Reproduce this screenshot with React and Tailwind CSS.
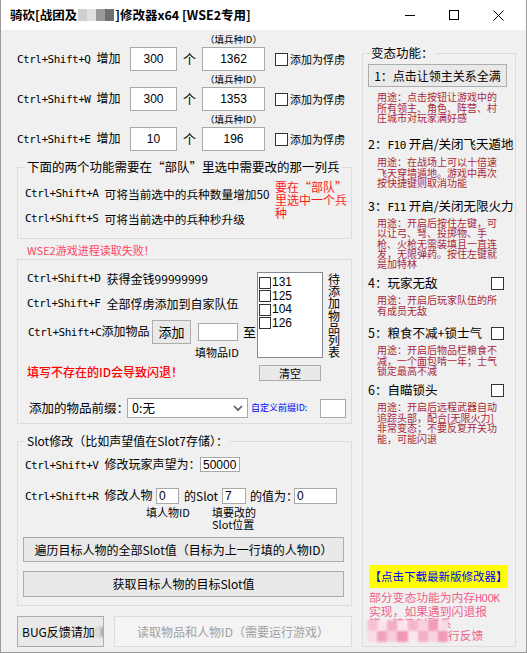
import React from "react";

const CJK = "font-['Noto_Sans_CJK_SC','Noto_Sans',sans-serif]";
const MONO = "font-['DejaVu_Sans_Mono','Noto_Sans_CJK_SC',monospace] text-[11px] tracking-[-0.5px]";
const SANS = "font-['Liberation_Sans','Noto_Sans_CJK_SC',sans-serif]";

// hotkey label, with a hard space after it when asked for
function Key({ k, space = true }) {
  return (
    <span className={MONO}>
      {k}
      {space ? "\u00a0" : ""}
    </span>
  );
}

function TextBox({ value = "", className = "", center = false }) {
  return (
    <div
      className={
        "bg-white border border-[#a9a9a9] flex items-center text-[12px] text-black shrink-0 " +
        SANS +
        " " +
        (center ? "justify-center " : "pl-[2px] ") +
        className
      }
    >
      {value}
    </div>
  );
}

function Check({ className = "" }) {
  return <span className={"inline-block w-[13px] h-[13px] bg-white border border-[#333333] shrink-0 " + className} />;
}

function Button({ children, className = "" }) {
  return (
    <div
      className={
        "bg-[#e9e9e9] border border-[#adadad] flex items-center justify-center text-black shrink-0 " + CJK + " " + className
      }
    >
      {children}
    </div>
  );
}

function Desc({ lines, className = "" }) {
  return (
    <div className={"pl-[14px] text-[10px] text-[#a8283c] whitespace-nowrap " + CJK + " " + className}>
      {lines.map((l, i) => (
        <div key={i}>{l}</div>
      ))}
    </div>
  );
}

function Heading({ children, check = false, className = "" }) {
  return (
    <div className={"flex items-center justify-between pl-[5px] w-[141px] h-[18px] text-[12.5px] leading-[18px] " + CJK + " " + className}>
      <span className="whitespace-nowrap">{children}</span>
      {check && <Check />}
    </div>
  );
}

const troopRows = [
  ["Q", "300", "1362"],
  ["W", "300", "1353"],
  ["E", "10", "196"],
];

const pinkCells = [
  "bg-[#f7c2d3]", "bg-[#fbe4ec]", "bg-[#f4a9c2]", "bg-[#fde9ef]", "bg-[#f6b6cb]", "bg-[#fad5e1]", "bg-[#f49bb9]", "bg-[#fbe0e9]",
  "bg-[#fadbe5]", "bg-[#f39ab8]", "bg-[#f8cad9]", "bg-[#f28db0]", "bg-[#fbe7ee]", "bg-[#f5a8c1]", "bg-[#f9d2df]", "bg-[#f190b2]",
];

export default function App() {
  return (
    <div className={"w-[527px] h-[653px] bg-[#f0f0f0] border-x border-b border-[#9a9a9a] flex flex-col overflow-hidden text-black " + CJK}>
      {/* title bar */}
      <div className="h-[30px] bg-white flex items-center shrink-0">
        <div className="pl-[9px] text-[12.5px] font-bold whitespace-nowrap flex items-center">
          <span>骑砍[战团及</span>
          <span className="inline-flex mx-[1px] blur-[0.7px]">
            <span className="w-[9px] h-[12px] bg-[#cfcfcf]" />
            <span className="w-[9px] h-[12px] bg-[#e0e0e0]" />
            <span className="w-[9px] h-[12px] bg-[#9a9a9a]" />
            <span className="w-[9px] h-[12px] bg-[#6f6f6f]" />
          </span>
          <span>]修改器x64 [WSE2专用]</span>
        </div>
        <div className="ml-auto flex items-center pr-[6px]">
          <div className="w-[44px] h-[30px] flex items-center justify-center">
            <svg width="10" height="10" viewBox="0 0 10 10">
              <line x1="0" y1="5.5" x2="10" y2="5.5" stroke="#000" strokeWidth="1" />
            </svg>
          </div>
          <div className="w-[44px] h-[30px] flex items-center justify-center">
            <svg width="10" height="10" viewBox="0 0 10 10">
              <rect x="0.5" y="0.5" width="9" height="9" fill="none" stroke="#000" strokeWidth="1" />
            </svg>
          </div>
          <div className="w-[44px] h-[30px] flex items-center justify-center">
            <svg width="11" height="11" viewBox="0 0 11 11">
              <line x1="0.5" y1="0.5" x2="10.5" y2="10.5" stroke="#000" strokeWidth="1" />
              <line x1="10.5" y1="0.5" x2="0.5" y2="10.5" stroke="#000" strokeWidth="1" />
            </svg>
          </div>
        </div>
      </div>

      {/* body */}
      <div className="flex flex-row flex-1">
        {/* left column */}
        <div className="w-[356px] flex flex-col shrink-0">
          <div className="pt-[2px] flex flex-col">
            {troopRows.map(([k, n, id]) => (
              <div key={k} className="h-[40px] flex flex-col">
                <div className="h-[15px] flex">
                  <span className="w-[201px]" />
                  <span className="w-[63px] text-center text-[9.5px] leading-[15px] whitespace-nowrap">（填兵种ID）</span>
                </div>
                <div className="h-[24px] flex items-center">
                  <div className="w-[129px] pl-[16px] whitespace-nowrap text-[12px]">
                    <Key k={"Ctrl+Shift+" + k} />
                    <span>增加</span>
                  </div>
                  <TextBox value={n} center className="w-[47px] h-[24px]" />
                  <span className="w-[25px] text-center text-[13px]">个</span>
                  <TextBox value={id} center className="w-[63px] h-[24px]" />
                  <Check className="ml-[10px]" />
                  <span className="ml-[2px] text-[11px] whitespace-nowrap">添加为俘虏</span>
                </div>
              </div>
            ))}
          </div>

          {/* group: selected troop */}
          <fieldset className="mt-[7px] ml-[16px] w-[335px] border border-[#dcdcdc]">
            <legend className="ml-[7px] px-[2px] text-[12.5px] leading-[16px] whitespace-nowrap">
              下面的两个功能需要在“部队”里选中需要改的那一列兵
            </legend>
            <div className="flex flex-row pb-[9px]">
              <div className="w-[257px] flex flex-col text-[11.7px]">
                <div className="mt-[9px] h-[20px] pl-[7px] flex items-center whitespace-nowrap">
                  <Key k="Ctrl+Shift+A" />
                  <span>可将当前选中的兵种数量增加50</span>
                </div>
                <div className="mt-[5px] h-[20px] pl-[7px] flex items-center whitespace-nowrap">
                  <Key k="Ctrl+Shift+S" />
                  <span>可将当前选中的兵种秒升级</span>
                </div>
              </div>
              <div className="pt-[5px] text-[12px] leading-[13px] text-[#ff1a1a] whitespace-nowrap">
                要在“部队”
                <br />
                里选中一个兵
                <br />种
              </div>
            </div>
          </fieldset>

          <div className="h-[20px] pl-[26px] text-[11px] leading-[22px] text-[#ff4466] whitespace-nowrap">
            WSE2游戏进程读取失败！
          </div>

          {/* group: items */}
          <fieldset className="ml-[16px] w-[335px] border border-[#dcdcdc] pb-[5px]">
            <div className="flex flex-row">
              <div className="w-[239px] flex flex-col text-[12px]">
                <div className="mt-[9px] h-[20px] pl-[9px] flex items-center whitespace-nowrap">
                  <Key k="Ctrl+Shift+D" />
                  <span>获得金钱99999999</span>
                </div>
                <div className="mt-[5px] h-[20px] pl-[9px] flex items-center whitespace-nowrap">
                  <Key k="Ctrl+Shift+F" />
                  <span>全部俘虏添加到自家队伍</span>
                </div>
                <div className="mt-[6px] h-[24px] pl-[10px] flex items-center">
                  <div className="w-[124px] whitespace-nowrap">
                    <Key k="Ctrl+Shift+C" space={false} />
                    <span>添加物品</span>
                  </div>
                  <Button className="w-[39px] h-[24px] text-[13px]">添加</Button>
                  <TextBox className="ml-[7px] w-[40px] h-[18px]" />
                  <span className="ml-[5px] text-[13px]">至</span>
                </div>
                <div className="h-[16px] pl-[177px] text-[11px] leading-[16px] whitespace-nowrap">填物品ID</div>
                <div className="mt-[2px] h-[20px] pl-[9px] flex items-center text-[12px] font-medium text-[#ff0000] whitespace-nowrap">
                  填写不存在的ID会导致闪退！
                </div>
              </div>
              <div className="flex flex-col">
                <div className="flex flex-row">
                  <div className={"mt-[12px] w-[66px] h-[86px] bg-white border border-[#828790] pt-[3px] pl-[1px] flex flex-col " + SANS}>
                    {["131", "125", "104", "126"].map((v) => (
                      <div key={v} className="h-[13.5px] flex items-center gap-[1px] text-[12px] leading-[13px]">
                        <span className="inline-block w-[12px] h-[12px] border border-[#333333] bg-white" />
                        <span>{v}</span>
                      </div>
                    ))}
                  </div>
                  <div className="ml-[5px] mt-[13px] flex flex-col text-[12px]">
                    {["待", "添", "加", "物", "品", "列", "表"].map((c) => (
                      <span key={c} className="h-[12.2px] leading-[12.2px]">
                        {c}
                      </span>
                    ))}
                  </div>
                </div>
                <Button className="mt-[7px] ml-[2px] w-[62px] h-[16px] text-[11px]">清空</Button>
              </div>
            </div>
            <div className="mt-[16px] h-[20px] pl-[11px] flex items-center">
              <span className="w-[98px] text-[12.5px] whitespace-nowrap">添加的物品前缀：</span>
              <div className="w-[121px] h-[20px] bg-white border border-[#a9a9a9] flex items-center justify-between pl-[4px] pr-[4px]">
                <span className="text-[12.5px]">0:无</span>
                <svg width="10" height="7" viewBox="0 0 10 7">
                  <polyline points="1,1 5,5 9,1" fill="none" stroke="#555" strokeWidth="1.6" />
                </svg>
              </div>
              <span className="ml-[3px] w-[69px] text-[9px] text-[#0000ff] whitespace-nowrap">自定义前缀ID:</span>
              <TextBox className="w-[26px] h-[19px]" />
            </div>
          </fieldset>

          {/* group: slot */}
          <fieldset className="mt-[9px] ml-[16px] w-[335px] border border-[#dcdcdc] pb-[8px]">
            <legend className="ml-[7px] px-[2px] text-[12px] leading-[16px] whitespace-nowrap">
              Slot修改（比如声望值在Slot7存储）：
            </legend>
            <div className="mt-[7px] h-[17px] pl-[7px] flex items-center text-[12px]">
              <div className="w-[175px] whitespace-nowrap">
                <Key k="Ctrl+Shift+V" />
                <span>修改玩家声望为：</span>
              </div>
              <TextBox value="50000" className="w-[40px] h-[15px]" />
            </div>
            <div className="mt-[15px] h-[16px] pl-[7px] flex items-center text-[12px]">
              <div className="w-[131px] whitespace-nowrap">
                <Key k="Ctrl+Shift+R" />
                <span>修改人物</span>
              </div>
              <TextBox value="0" className="w-[23px] h-[16px]" />
              <span className="ml-[5px] w-[38px] whitespace-nowrap">的Slot</span>
              <TextBox value="7" className="w-[24px] h-[16px]" />
              <span className="ml-[4px] w-[44px] whitespace-nowrap">的值为：</span>
              <TextBox value="0" className="w-[43px] h-[16px]" />
            </div>
            <div className="mt-[2px] h-[24px] pl-[128px] flex text-[11px] leading-[12px]">
              <span className="w-[66px] whitespace-nowrap">填人物ID</span>
              <span className="whitespace-nowrap">
                填要改的
                <br />
                Slot位置
              </span>
            </div>
            <Button className="mt-[7px] ml-[5px] w-[321px] h-[25px] text-[12px]">
              遍历目标人物的全部Slot值（目标为上一行填的人物ID）
            </Button>
            <Button className="mt-[9px] ml-[5px] w-[321px] h-[26px] text-[12px]">获取目标人物的目标Slot值</Button>
          </fieldset>

          <div className="mt-[10px] ml-[16px] flex flex-row">
            <Button className="w-[87px] h-[31px] text-[12px] justify-start pl-[4px] whitespace-nowrap overflow-hidden">
              <span>BUG反馈请加</span>
              <span className="inline-flex blur-[0.8px]">
                <span className="w-[6px] h-[10px] bg-[#d6d6d6]" />
                <span className="w-[6px] h-[10px] bg-[#a9a9a9]" />
                <span className="w-[6px] h-[10px] bg-[#bdbdbd]" />
              </span>
            </Button>
            <div className="ml-[10px] w-[238px] h-[31px] bg-[#f4f4f4] border border-[#dcdcdc] flex items-center justify-center text-[12px] text-[#a0a0a0] whitespace-nowrap">
              读取物品和人物ID（需要运行游戏）
            </div>
          </div>
        </div>

        {/* right column */}
        <div className="flex flex-col">
          <fieldset className="mt-[13px] ml-[5px] w-[154px] h-[604px] border border-[#dcdcdc] flex flex-col">
            <legend className="ml-[7px] px-[1px] text-[12.5px] leading-[20px] whitespace-nowrap">变态功能：</legend>
            <Button className="mt-[1px] ml-[5px] w-[139px] h-[23px] text-[12px] whitespace-nowrap">1：点击让领主关系全满</Button>
            <Desc
              className="mt-[5px] leading-[10.5px]"
              lines={["用途：点击按钮让游戏中的", "所有领主、角色、阵营、村", "庄城市对玩家满好感"]}
            />
            <Heading className="mt-[12.5px]">
              2：<span className={MONO}>F10</span> 开启/关闭飞天遁地
            </Heading>
            <Desc
              className="mt-[3px] leading-[10.5px]"
              lines={["用途：在战场上可以十倍速", "飞天穿墙遁地。游戏中再次", "按快捷键则取消功能"]}
            />
            <Heading className="mt-[9.5px]">
              3：<span className={MONO}>F11</span> 开启/关闭无限火力
            </Heading>
            <Desc
              className="mt-[2px] leading-[10.25px]"
              lines={[
                "用途：开启后按住左键，可",
                "以让弓、弩、投掷物、手",
                "枪、火枪无需装填且一直连",
                "发，无限弹药。按住左键就",
                "是加特林",
              ]}
            />
            <Heading check className="mt-[4.75px]">4：玩家无敌</Heading>
            <Desc className="mt-[3px] leading-[10.5px]" lines={["用途：开启后玩家队伍的所", "有成员无敌"]} />
            <Heading check className="mt-[8px]">5：粮食不减+锁士气</Heading>
            <Desc
              className="mt-[3px] leading-[10.5px]"
              lines={["用途：开启后物品栏粮食不", "减，一个面包啃一年；士气", "锁定最高不减"]}
            />
            <Heading check className="mt-[4.5px]">6：自瞄锁头</Heading>
            <Desc
              className="mt-[3px] leading-[10.5px]"
              lines={["用途：开启后远程武器自动", "追踪头部，配合[无限火力]", "非常变态；不要反复开关功", "能，可能闪退"]}
            />
            <div className="mt-[121px] ml-[6px] w-[139px] h-[23px] bg-[#ffff00] text-[#0000ff] text-[11.5px] flex items-center justify-center whitespace-nowrap">
              【点击下载最新版修改器】
            </div>
            <div className="relative mt-[3px] pl-[6px] text-[11.8px] leading-[12px] text-[#f0608a] whitespace-nowrap">
              <div>
                部分变态功能为内存<span className={MONO}>HOOK</span>
              </div>
              <div>实现，如果遇到闪退报</div>
              <div>错，请及时联系</div>
              <div className="pl-[79px]">行反馈</div>
              <div className="absolute left-[4px] top-[29px] w-[81px] h-[22px] grid grid-cols-8 blur-[1.2px] opacity-90">
                {pinkCells.map((c, i) => (
                  <span key={i} className={c} />
                ))}
              </div>
            </div>
          </fieldset>
        </div>
      </div>
    </div>
  );
}
